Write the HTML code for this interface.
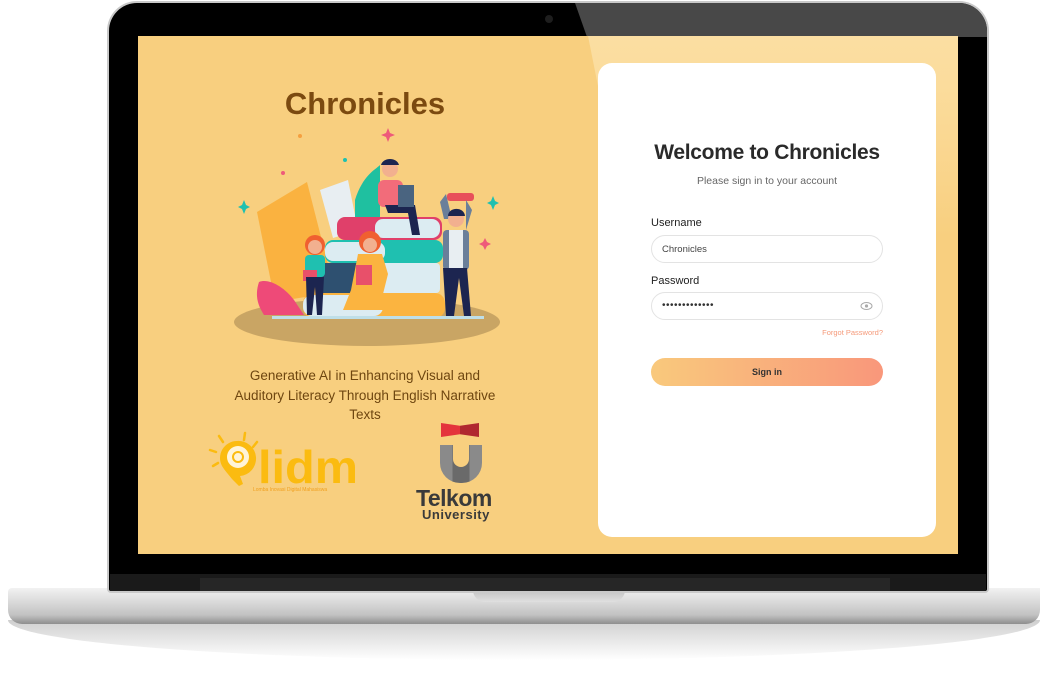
<!DOCTYPE html>
<html><head><meta charset="utf-8"><style>
*{margin:0;padding:0;box-sizing:border-box}
body{width:1040px;height:677px;background:#fff;position:relative;overflow:hidden;font-family:"Liberation Sans",sans-serif}
.abs{position:absolute}
</style></head><body>
<div class="abs" style="left:8px;top:620px;width:1032px;height:40px;background:linear-gradient(#cfcfcf,#fff);border-radius:0 0 50% 50%/0 0 100% 100%"></div>
<div class="abs" style="left:8px;top:588px;width:1032px;height:36px;background:linear-gradient(#f2f2f2,#d9d9d9 40%,#c2c2c2 75%,#8e8e8e);border-radius:4px 0 14px 14px"></div>
<div class="abs" style="left:473px;top:588px;width:152px;height:14px;background:linear-gradient(#bdbdbd,#e0e0e0);border-radius:0 0 12px 12px"></div>
<div class="abs" style="left:107px;top:1px;width:882px;height:592px;background:#c9c9c9;border-radius:30px 30px 4px 4px"></div>
<div class="abs" style="left:109px;top:3px;width:878px;height:588px;background:#000;border-radius:28px 28px 2px 2px;overflow:hidden">
  <div class="abs" style="left:466px;top:0;width:420px;height:34px;background:#484848;clip-path:polygon(0 0,100% 0,100% 100%,12px 100%)"></div>
</div>
<div class="abs" style="left:110px;top:574px;width:876px;height:17px;background:#1a1a1a"></div>
<div class="abs" style="left:200px;top:578px;width:690px;height:13px;background:#262626"></div>
<div class="abs" style="left:545px;top:15px;width:8px;height:8px;border-radius:50%;background:#1e1e1e"></div>
<div class="abs" style="left:138px;top:36px;width:820px;height:518px;background:#f8cf7f;overflow:hidden">
  <div class="abs" style="left:450px;top:0;width:370px;height:200px;background:linear-gradient(#fbdea2,#fbdc9c 25%,#f8cf7f);clip-path:polygon(0 0,100% 0,100% 100%,40px 100%)"></div>
</div>
<div class="abs" style="left:225px;top:86px;width:280px;text-align:center;font-size:31px;font-weight:bold;color:#7b4a10">Chronicles</div>
<svg class="abs" style="left:230px;top:125px" width="280" height="225" viewBox="230 125 280 225">
  <ellipse cx="367" cy="322" rx="133" ry="24" fill="#c9a564"/>
  <g><path d="M388 128l2 5 5 2-5 2-2 5-2-5-5-2 5-2z" fill="#ee5a7a"/><circle cx="300" cy="136" r="2" fill="#f5a040"/><circle cx="283" cy="173" r="2" fill="#ee5a7a"/><path d="M244 200l2 5 4 2-4 2-2 5-2-5-4-2 4-2z" fill="#1fc0b0"/><path d="M493 196l2 5 4 2-4 2-2 5-2-5-4-2 4-2z" fill="#1fc0b0"/><path d="M485 238l2 4 4 2-4 2-2 4-2-4-4-2 4-2z" fill="#ee5a7a"/><circle cx="345" cy="160" r="2" fill="#1fc0b0"/></g>
  <path d="M257 212l50-30 28 110-60 10z" fill="#fab240"/>
  <path d="M320 190l28-10 10 50-25 8z" fill="#e8eef2"/>
  <path d="M355 200c8-25 20-30 25-35l0 55h-25z" fill="#1fc0a0"/>
  <rect x="303" y="293" width="142" height="25" rx="10" fill="#fbb440"/><rect x="303" y="295" width="80" height="21" rx="9" fill="#dcecf2"/>
  <rect x="318" y="263" width="122" height="30" rx="4" fill="#dcecf2"/><rect x="318" y="263" width="45" height="30" fill="#2e5070"/>
  <rect x="325" y="240" width="118" height="23" rx="8" fill="#1fc0b0"/><rect x="325" y="242" width="60" height="19" rx="8" fill="#dcecf2"/>
  <rect x="337" y="217" width="105" height="23" rx="8" fill="#e0406a"/><rect x="375" y="219" width="65" height="19" rx="8" fill="#dcecf2"/>
  <circle cx="390" cy="169" r="8" fill="#f2b08f"/><path d="M381 165c2-8 16-8 18 0z" fill="#1c2550"/>
  <rect x="378" y="180" width="25" height="27" rx="6" fill="#f26c7a"/><path d="M385 205h30l5 30h-8l-4-22h-20z" fill="#1c2550"/><rect x="398" y="185" width="16" height="22" fill="#4a6480"/>
  <path d="M440 202l6-8 6 25-8 0z" fill="#6a7f9a"/><rect x="447" y="193" width="27" height="8" rx="3" fill="#e8505a"/><path d="M466 200l6 10-6 20z" fill="#6a7f9a"/>
  <circle cx="456" cy="219" r="8" fill="#f2b08f"/><path d="M448 216c0-9 16-10 17 0z" fill="#1c2550"/>
  <rect x="443" y="230" width="26" height="40" rx="4" fill="#6a7f9a"/><rect x="449" y="230" width="14" height="40" fill="#e8eef2"/>
  <path d="M443 268h24l4 48h-7l-5-38-5 38h-8z" fill="#1c2550"/>
  <circle cx="315" cy="245" r="10" fill="#f06030"/><circle cx="315" cy="247" r="7" fill="#f2b08f"/>
  <rect x="305" y="255" width="20" height="22" rx="4" fill="#1fc0b0"/><rect x="303" y="270" width="14" height="11" fill="#e8506a"/><path d="M306 277h18l-2 38h-5l-2-28-3 28h-5z" fill="#1c2550"/>
  <circle cx="370" cy="242" r="11" fill="#f06030"/><circle cx="370" cy="245" r="7" fill="#f2b08f"/>
  <path d="M358 254h24l6 20-5 20 5 16h-45l8-20z" fill="#fbb440"/><rect x="356" y="265" width="16" height="20" fill="#e8506a"/>
  <path d="M259 282c10-4 25 5 35 18l10 15h-40c-5-8-10-18-5-33z" fill="#ee4a78"/>
  <rect x="272" y="316" width="212" height="3" fill="#bfdfe8"/>
</svg>
<div class="abs" style="left:165px;top:366px;width:400px;text-align:center;font-size:13.5px;line-height:19.5px;color:#6e4610;white-space:nowrap">Generative AI in Enhancing Visual and<br>Auditory Literacy Through English Narrative<br>Texts</div>
<svg class="abs" style="left:205px;top:428px" width="160" height="65" viewBox="0 0 160 65">
  <g stroke="#fbbb10" stroke-width="2.5" stroke-linecap="round"><line x1="14" y1="8" x2="18" y2="14"/><line x1="5" y1="22" x2="11" y2="24"/><line x1="8" y1="38" x2="13" y2="35"/><line x1="40" y1="5" x2="39" y2="12"/><line x1="52" y1="14" x2="48" y2="19"/></g>
  <path d="M32 13a17 17 0 0 0-15 25c3 5 7 9 10 13l7 7 4-2-3-8a17 17 0 0 0-3-35z" fill="#fbbb10"/>
  <circle cx="33" cy="29" r="11" fill="#fff4d8"/><circle cx="33" cy="29" r="5" fill="none" stroke="#fbbb10" stroke-width="2"/>
  <text x="53" y="55" font-family="Liberation Sans,sans-serif" font-weight="bold" font-size="46" fill="#fbbb10" textLength="100" lengthAdjust="spacingAndGlyphs">lidm</text>
  <text x="48" y="63" font-size="5" fill="#f0a020">Lomba Inovasi Digital Mahasiswa</text>
</svg>
<div class="abs" style="left:441px;top:423px;width:38px;height:14px;background:linear-gradient(90deg,#e4343c 50%,#b02830 50%);clip-path:polygon(0 0,50% 20%,100% 0,100% 100%,50% 80%,0 100%)"></div>
<div class="abs" style="left:440px;top:445px;width:42px;height:38px;background:linear-gradient(90deg,#8a8a8a 30%,#6a6a6a 30%,#6a6a6a 70%,#8a8a8a 70%);border-radius:0 0 20px 20px"></div>
<div class="abs" style="left:453px;top:445px;width:16px;height:22px;background:#f8cf7f;border-radius:0 0 8px 8px"></div>
<div class="abs" style="left:416px;top:485px;width:90px;font-size:23px;font-weight:bold;color:#3a3a3a;letter-spacing:-0.5px">Telkom</div>
<div class="abs" style="left:422px;top:507px;width:90px;font-size:13px;font-weight:bold;color:#3a3a3a;letter-spacing:0.5px">University</div>
<div class="abs" style="left:598px;top:63px;width:338px;height:474px;background:#fff;border-radius:14px"></div>
<div class="abs" style="left:598px;top:141px;width:338px;text-align:center;font-size:21px;font-weight:bold;color:#2a2a2a;letter-spacing:-0.3px">Welcome to Chronicles</div>
<div class="abs" style="left:598px;top:175px;width:338px;text-align:center;font-size:10.5px;color:#666">Please sign in to your account</div>
<div class="abs" style="left:651px;top:217px;font-size:11px;color:#222">Username</div>
<div class="abs" style="left:651px;top:235px;width:232px;height:28px;border:1px solid #e3e3e3;border-radius:14px;font-size:9.5px;color:#444;padding:8px 0 0 10px">Chronicles</div>
<div class="abs" style="left:651px;top:275px;font-size:11px;color:#222">Password</div>
<div class="abs" style="left:651px;top:292px;width:232px;height:28px;border:1px solid #e3e3e3;border-radius:14px;font-size:10px;color:#333;padding:7px 0 0 10px;letter-spacing:0.5px">•••••••••••••</div>
<svg class="abs" style="left:860px;top:301px" width="13" height="10" viewBox="0 0 13 10"><ellipse cx="6.5" cy="5" rx="5.5" ry="3.5" fill="none" stroke="#aaa"/><circle cx="6.5" cy="5" r="1.6" fill="#aaa"/></svg>
<div class="abs" style="left:780px;top:328px;width:103px;text-align:right;font-size:7.5px;color:#f59a7a">Forgot Password?</div>
<div class="abs" style="left:651px;top:358px;width:232px;height:28px;border-radius:14px;background:linear-gradient(90deg,#f9c97c,#f9977b);font-size:9px;font-weight:bold;color:#333;text-align:center;line-height:28px">Sign in</div>
</body></html>
